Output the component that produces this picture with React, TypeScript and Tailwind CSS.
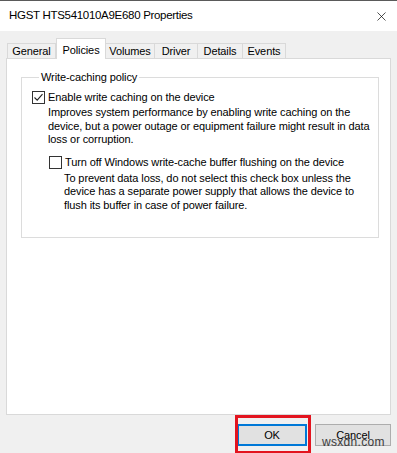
import { X } from 'lucide-react';

const tabs = ['General', 'Policies', 'Volumes', 'Driver', 'Details', 'Events'];
const tabWidths: Record<string, string> = {
    General: 'w-[49px]',
    Policies: 'w-[50px]',
    Volumes: 'w-[49px]',
    Driver: 'w-[43px]',
    Details: 'w-[45px]',
    Events: 'w-[43px]',
};

function CheckBox({ checked }: { checked: boolean }) {
    return (
        <div className="w-[13px] h-[13px] shrink-0 border border-[#333333] bg-white flex items-center justify-center">
            {checked && (
                <svg width="11" height="11" viewBox="0 0 11 11">
                    <path d="M1.5 5.5 L4.2 8.2 L9.5 2.2" fill="none" stroke="#222" strokeWidth="1.1" />
                </svg>
            )}
        </div>
    );
}

function App() {
    return (
        <div className="w-[397px] h-[453px] bg-[#f0f0f0] border-t border-[#5a5a5a] flex flex-col overflow-hidden text-[11px] tracking-[-0.1px] text-black font-['Liberation_Sans',Arial,sans-serif]">
            {/* Title bar */}
            <header className="h-[30px] bg-white flex items-center justify-between pl-[9px] pr-[8px]">
                <span className="text-[11.5px] tracking-[-0.3px]">HGST HTS541010A9E680 Properties</span>
                <X size={15} strokeWidth={1.1} className="text-black" />
            </header>

            {/* Tabs */}
            <nav className="mt-[7px] ml-[7px] h-[21px] flex items-end relative z-10">
                {tabs.map((t) =>
                    t === 'Policies' ? (
                        <div
                            key={t}
                            className={`${tabWidths[t]} h-[21px] bg-white border border-b-0 border-[#d9d9d9] flex items-start justify-center pt-[3px]`}
                        >
                            {t}
                        </div>
                    ) : (
                        <div
                            key={t}
                            className={`${tabWidths[t]} h-[15px] mb-[1px] border-t border-r border-[#d9d9d9] first:border-l flex items-center justify-center pt-[1px]`}
                        >
                            {t}
                        </div>
                    )
                )}
            </nav>

            {/* Panel */}
            <main className="-mt-[1px] ml-[6px] w-[385px] h-[357px] bg-white border border-[#d9d9d9] px-[14px] pt-[11px]">
                <fieldset className="border border-[#dcdcdc] w-[358px] h-[168px] pl-[10px]">
                    <legend className="ml-[7px] px-[2px] leading-[14px]">Write-caching policy</legend>

                    <div className="flex items-center gap-[3px] mt-[6px] h-[14px]">
                        <CheckBox checked />
                        <span>Enable write caching on the device</span>
                    </div>
                    <p className="ml-[16px] mt-[2px] leading-[13.5px] pr-[6px]">
                        Improves system performance by enabling write caching on the device, but a power outage or equipment failure might result in data loss or corruption.
                    </p>

                    <div className="flex items-center gap-[3px] mt-[9px] ml-[17px] h-[14px]">
                        <CheckBox checked={false} />
                        <span>Turn off Windows write-cache buffer flushing on the device</span>
                    </div>
                    <p className="ml-[32px] mt-[2px] leading-[13.5px] pr-[14px]">
                        To prevent data loss, do not select this check box unless the device has a separate power supply that allows the device to flush its buffer in case of power failure.
                    </p>
                </fieldset>
            </main>

            {/* Buttons */}
            <footer className="relative mt-[9px] flex justify-end gap-[8px] pr-[6px]">
                <button className="w-[70px] h-[22px] bg-[#e1e1e1] border-2 border-[#0078d7] text-[11px]">OK</button>
                <button className="w-[76px] h-[22px] bg-[#e1e1e1] border border-[#adadad] text-[11px]">Cancel</button>
                <div className="absolute left-[235px] -top-[9px] w-[76px] h-[39px] border-[3px] border-[#e3141f]" />
                <span className="absolute left-[322px] top-[9px] text-[12px] text-[#3c3c3c] tracking-[0.3px]">wsxdn.com</span>
            </footer>
        </div>
    );
}

export default App;
